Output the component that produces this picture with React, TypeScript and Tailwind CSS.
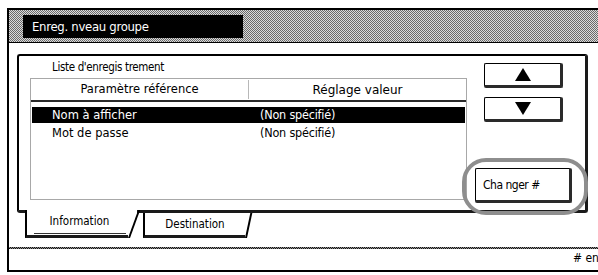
import React from "react";

const hatch =
  "bg-[repeating-conic-gradient(#6a6a6a_0_25%,#dcdcdc_0_50%)] bg-[length:2px_2px]";
const darkHatch =
  "bg-[repeating-conic-gradient(#111_0_25%,#8a8a8a_0_50%)] bg-[length:2px_2px]";

function ArrowButton({ up }: { up: boolean }) {
  return (
    <div className="ml-[9px] w-[79px] h-[25px] bg-white border-l border-t border-black border-r-[3px] border-b-[3px] border-r-[#2a2a2a] border-b-[#2a2a2a] rounded-[2px] flex items-center justify-center">
      <svg width="16" height="13" viewBox="0 0 16 13">
        {up ? (
          <polygon points="8,0 16,13 0,13" fill="#000" />
        ) : (
          <polygon points="0,0 16,0 8,13" fill="#000" />
        )}
      </svg>
    </div>
  );
}

export default function App() {
  return (
    <div className="w-[598px] h-[275px] bg-white overflow-hidden text-black font-['Liberation_Sans',sans-serif]">
      <div className="ml-[7px] mt-[8px] h-[264px] border-l-2 border-t-2 border-b-2 border-black flex flex-col">
        {/* Title bar */}
        <div className={`h-[33px] shrink-0 border-b border-black pl-[14px] pt-[5px] ${hatch}`}>
          <div className="w-[220px] h-[23px] bg-black text-white text-[13px] leading-[23px] pl-[9px] font-['DejaVu_Sans_Condensed','DejaVu_Sans',sans-serif] tracking-[-0.3px]">
            Enreg. nveau groupe
          </div>
        </div>

        {/* Content */}
        <div className="h-[204px] shrink-0 pt-[11px] pl-[8px]">
          {/* Panel */}
          <div className="relative w-[571px] h-[159px] bg-white border-l-2 border-t-2 border-black border-r-[3px] border-b-[3px] border-r-[#1a1a1a] border-b-[#1a1a1a] rounded-[3px] flex pl-[11px] pr-[13px]">
            {/* Left column */}
            <div className="w-[437px] flex flex-col">
              <div className="h-[14px] mt-[4px] pl-[22px] text-[11.5px] leading-[14px] font-['DejaVu_Sans_Condensed','DejaVu_Sans',sans-serif] tracking-[-0.35px]">
                Liste d'enregis trement
              </div>
              <div className="mt-[4px] h-[122px] border border-[#a8a8a8] flex flex-col font-['DejaVu_Sans',sans-serif] text-[11.5px]">
                <div className="h-[23px] shrink-0 flex border-b-2 border-[#2a2a2a]">
                  <div className="w-[217px] flex items-center justify-center">Paramètre référence</div>
                  <div className="w-px my-[1px] bg-[#b8b8b8]" />
                  <div className="flex-1 flex items-center justify-center text-[12px]">Réglage valeur</div>
                </div>
                <div className="px-px pt-[5px] flex flex-col gap-[2px]">
                  <div className="h-[16px] bg-black text-white flex items-center">
                    <div className="w-[228px] pl-[20px] leading-[16px]">Nom à afficher</div>
                    <div className="font-['DejaVu_Sans_Condensed','DejaVu_Sans',sans-serif] text-[12.5px] tracking-[-0.2px] leading-[16px]">(Non spécifié)</div>
                  </div>
                  <div className="h-[16px] flex items-center">
                    <div className="w-[228px] pl-[20px] leading-[16px]">Mot de passe</div>
                    <div className="font-['DejaVu_Sans_Condensed','DejaVu_Sans',sans-serif] text-[12.5px] tracking-[-0.2px] leading-[16px]">(Non spécifié)</div>
                  </div>
                </div>
              </div>
            </div>

            {/* Right column */}
            <div className="ml-[8px] w-[97px] flex flex-col pt-[7px]">
              <ArrowButton up />
              <div className="h-[9px]" />
              <ArrowButton up={false} />
              <div className="relative mt-[46px]">
                <div className="h-[35px] bg-white border-l border-t border-black border-r-[3px] border-b-[3px] border-r-[#2a2a2a] border-b-[#2a2a2a] rounded-[2px] flex items-center pl-[7px] text-[12px] tracking-[-0.5px] whitespace-pre font-['DejaVu_Sans_Condensed','DejaVu_Sans',sans-serif]">
                  Cha nger #
                </div>
                <div className="absolute -left-[13px] -right-[16px] -top-[10px] -bottom-[12px] border-[4px] border-[#8e8e8e] rounded-[24px] z-10 pointer-events-none" />
              </div>
            </div>
          </div>

          {/* Tabs */}
          <div className="flex pl-[8px] font-['DejaVu_Sans_Condensed','DejaVu_Sans',sans-serif] text-[11.5px]">
            <div className="relative -mt-[3px] h-[28px] w-[112px] bg-white flex">
              <div className="w-[103px] h-full border-l-2 border-b-[3px] border-black border-b-[#1a1a1a] flex flex-col items-center pt-[4px]">
                <div className="leading-[14px] pl-[4px]">Information</div>
                <div className="mt-[5px] ml-[4px] w-[92px] h-px bg-[#333]" />
              </div>
              <div className="w-[9px] h-full">
                <div className="h-full w-0 border-l-2 border-black origin-bottom-left -skew-x-[20deg]" />
              </div>
            </div>
            <div className="ml-[6px] h-[25px] w-[107px] flex">
              <div className="w-[102px] h-full border-l-2 border-b-[3px] border-black border-b-[#1a1a1a] flex items-center justify-center pb-[1px]">
                <div className="leading-[14px]">Destination</div>
              </div>
              <div className="w-[5px] h-full">
                <div className="h-full w-0 border-l-2 border-black origin-bottom-left -skew-x-[12deg]" />
              </div>
            </div>
          </div>
        </div>

        {/* Divider */}
        <div className={`h-[2px] shrink-0 ${darkHatch}`} />

        {/* Status strip */}
        <div className="flex-1 pl-[564px] pt-[2px] whitespace-nowrap text-[12px] leading-[14px] font-['DejaVu_Sans_Condensed','DejaVu_Sans',sans-serif]">
          # en
        </div>
      </div>
    </div>
  );
}
